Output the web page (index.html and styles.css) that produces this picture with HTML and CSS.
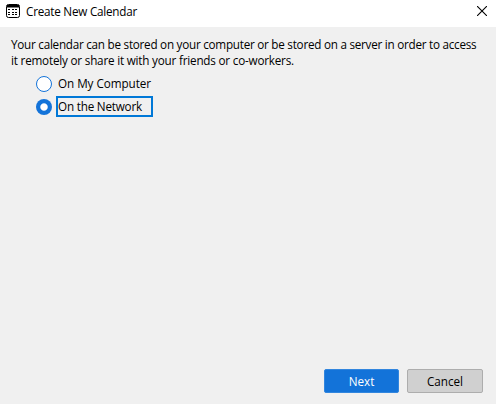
FILE: index.html
```html
<!DOCTYPE html>
<html lang="en">
<head>
<meta charset="utf-8">
<title>Create New Calendar</title>
<link rel="stylesheet" href="styles.css">
</head>
<body>
<div class="dialog">
  <header class="titlebar">
    <svg class="app-icon" width="14" height="14" viewBox="0 0 14 14">
      <rect x="0.5" y="0.5" width="13" height="13" rx="2" fill="#fff" stroke="#000"/>
      <path d="M1 1h12v2.5H1z"/>
      <path d="M2 5h2v1H2zM6 5h2v1H6zM9 5h2v1H9zM2 8h2v1H2zM6 8h2v1H6zM9 8h2v1H9zM2 10h2v1H2zM6 10h2v1H6zM9 10h2v1H9z"/>
    </svg>
    <h1 class="title">Create New Calendar</h1>
    <svg class="close" width="10" height="10" viewBox="0 0 10 10"><path d="M0 0L10 10M10 0L0 10" stroke="#000" stroke-width="1.1"/></svg>
  </header>
  <main class="content">
    <p class="intro"><span class="line first">Your calendar can be stored on your computer or be stored on a server in order to access</span> <span class="line second">it remotely or share it with your friends or co-workers.</span></p>
    <div class="options">
      <label class="option"><span class="radio"></span><span class="label computer">On My Computer</span></label>
      <label class="option"><span class="radio checked"></span><span class="label network focused">On the Network</span></label>
    </div>
  </main>
  <footer class="actions">
    <button class="button primary">Next</button>
    <button class="button">Cancel</button>
  </footer>
</div>
</body>
</html>
```
FILE: styles.css
```css
* { box-sizing: border-box; }
body {
  margin: 0;
  font: 11.7px/16px "Open Sans", "Noto Sans", sans-serif;
  color: #000;
}
.dialog {
  width: 496px;
  height: 404px;
  display: flex;
  flex-direction: column;
  background: #f0f0f0;
}
.titlebar {
  height: 27px;
  display: flex;
  align-items: flex-start;
  padding: 3px 9px 0 6px;
  background: #fff;
}
.app-icon { margin-top: 1px; }
.title {
  margin: 0 auto 0 6px;
  font-size: 11.7px;
  font-weight: 400;
  letter-spacing: -0.23px;
}
.close { margin-top: 3px; }
.content { flex: 1; padding: 9px 11px; }
.intro { margin: 0; }
.line { display: block; white-space: nowrap; letter-spacing: -0.25px; }
.second { letter-spacing: -0.2px; }
.options { padding-left: 25px; margin-top: 4px; }
.option { display: flex; align-items: center; height: 23px; }
.radio {
  width: 16px;
  height: 16px;
  border: 1px solid #1373d9;
  border-radius: 50%;
  background: #fff;
}
.radio.checked {
  border: 0;
  background: radial-gradient(circle, #fff 3.2px, #1373d9 4.2px);
}
.label {
  margin-left: 4px;
  border: 2px solid transparent;
  height: 21px;
  line-height: 17px;
  letter-spacing: -0.05px;
  white-space: nowrap;
}
.focused { border-color: #0078d7; width: 97px; letter-spacing: -0.2px; }
.actions {
  display: flex;
  justify-content: flex-end;
  gap: 8px;
  padding: 0 13px 11px 0;
}
.button {
  width: 76px;
  height: 24px;
  padding: 0;
  border: 1px solid #adadad;
  border-radius: 2px;
  background: #d0d0d0;
  color: #000;
  font: inherit;
}
.primary { width: 75px; background: #1373d9; border-color: #3286de; color: #fff; }
```
